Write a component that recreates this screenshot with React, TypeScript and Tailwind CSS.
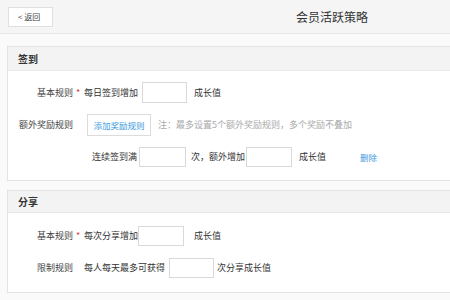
import React from 'react';

const font = { fontFamily: '"Noto Sans CJK SC", "Noto Sans", sans-serif' };

function Box({ w }: { w: string }) {
  return <div className={`${w} h-full border border-[#d9d9d9] bg-white`} />;
}

function Label({ text, required }: { text: string; required?: boolean }) {
  return (
    <div className="flex w-[71px] shrink-0 items-center justify-end text-[9px] text-[#444]">
      <span>{text}</span>
      <span className={`ml-[3px] w-[3px] text-[#e23a3a] ${required ? '' : 'invisible'}`}>*</span>
    </div>
  );
}

function Section({ title, children, headH }: { title: string; children: React.ReactNode; headH: string }) {
  return (
    <div className="w-[460px] border border-[#e3e3e3] bg-white">
      <div className={`flex ${headH} items-center border-b border-[#e8e8e8] bg-[#f3f3f3] pl-[10px] text-[10px] font-bold text-[#333]`}>
        {title}
      </div>
      {children}
    </div>
  );
}

export default function App() {
  return (
    <div className="h-[300px] w-[450px] overflow-hidden bg-[#fafafa]" style={font}>
      <div className="flex h-[34px] items-center border-b border-[#e6e6e6] bg-[#f5f5f5] pl-[8px]">
        <button className="flex h-[20px] w-[45px] items-center border border-[#e0e0e0] bg-white pl-[9px] text-[8px] text-[#444]">
          &lt; 返回
        </button>
        <div className="ml-[243px] text-[12px] text-[#333]">会员活跃策略</div>
      </div>

      <div className="pl-[7px] pt-[12px]">
        <Section title="签到" headH="h-[24px]">
          <div className="pb-[13px] pt-[11px]">
            <div className="flex h-[21px] items-center text-[9px] text-[#333]">
              <Label text="基本规则" required />
              <span className="ml-[5px]">每日签到增加</span>
              <div className="ml-[4px] h-full"><Box w="w-[45px]" /></div>
              <span className="ml-[7px]">成长值</span>
            </div>
            <div className="mt-[11px] flex h-[22px] items-center">
              <Label text="额外奖励规则" />
              <button className="ml-[8px] h-full w-[64px] border border-[#dcdcdc] bg-white text-[8.5px] text-[#3b9be0]">
                添加奖励规则
              </button>
              <span className="ml-[7px] text-[9px] text-[#aaa]">注：最多设置5个额外奖励规则，多个奖励不叠加</span>
            </div>
            <div className="mt-[11px] flex h-[20px] items-center text-[9px] text-[#333]">
              <span className="ml-[84px]">连续签到满</span>
              <div className="ml-[2px] h-full"><Box w="w-[47px]" /></div>
              <span className="ml-[5px]">次，额外增加</span>
              <div className="ml-[1px] h-full"><Box w="w-[46px]" /></div>
              <span className="ml-[7px]">成长值</span>
              <span className="ml-[34px] text-[8.5px] text-[#3b9be0]">删除</span>
            </div>
          </div>
        </Section>

        <div className="mt-[9px]">
          <Section title="分享" headH="h-[22px]">
            <div className="pb-[14px] pt-[13px]">
              <div className="flex h-[20px] items-center text-[9px] text-[#333]">
                <Label text="基本规则" required />
                <span className="ml-[5px]">每次分享增加</span>
                <div className="h-full"><Box w="w-[46px]" /></div>
                <span className="ml-[10px]">成长值</span>
              </div>
              <div className="mt-[12px] flex h-[20px] items-center text-[9px] text-[#333]">
                <Label text="限制规则" />
                <span className="ml-[5px]">每人每天最多可获得</span>
                <div className="ml-[4px] h-full"><Box w="w-[45px]" /></div>
                <span className="ml-[3px]">次分享成长值</span>
              </div>
            </div>
          </Section>
        </div>
      </div>
    </div>
  );
}
